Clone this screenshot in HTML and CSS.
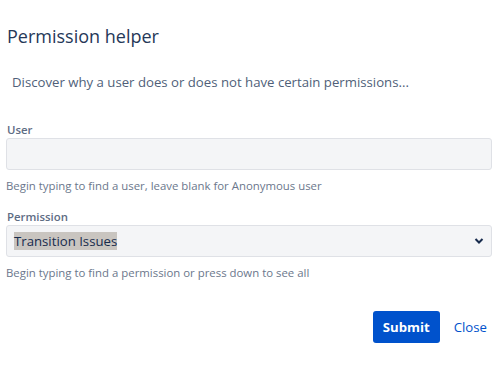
FILE: index.html
```html
<!DOCTYPE html>
<html lang="en">
<head>
    <meta charset="UTF-8">
    <title>Permission helper</title>
    <link rel="stylesheet" href="styles.css">
</head>
<body>
    <div class="dialog">
        <h2 class="dialog-title">Permission helper</h2>
        <p class="intro">Discover why a user does or does not have certain permissions...</p>

        <form class="form">
            <div class="field">
                <label for="user">User</label>
                <input type="text" id="user" class="text-input">
                <div class="hint">Begin typing to find a user, leave blank for Anonymous user</div>
            </div>

            <div class="field">
                <label for="permission">Permission</label>
                <div class="select">
                    <span class="selected-value">Transition Issues</span>
                    <svg class="chevron" width="10" height="8" viewBox="0 0 10 8">
                        <path d="M1.5 2 L5 5.5 L8.5 2" fill="none" stroke="#172b4d" stroke-width="2"/>
                    </svg>
                </div>
                <div class="hint">Begin typing to find a permission or press down to see all</div>
            </div>

            <div class="actions">
                <button type="button" class="btn-primary">Submit</button>
                <a href="#" class="link">Close</a>
            </div>
        </form>
    </div>
</body>
</html>
```

FILE: styles.css
```css
:root {
    --text: #172b4d;
    --heading: #253858;
    --muted: #6b778c;
    --label: #5e6c84;
    --field-bg: #f4f5f7;
    --field-border: #dfe1e6;
    --primary: #0052cc;
}

* {
    box-sizing: border-box;
    margin: 0;
    padding: 0;
}

body {
    font-family: 'Open Sans', sans-serif;
    background: #ffffff;
    color: var(--text);
}

.dialog {
    padding: 24px 11px 0 6px;
}

.dialog-title {
    font-size: 18px;
    font-weight: 400;
    color: var(--heading);
    line-height: 24px;
    padding-left: 1px;
}

.intro {
    font-size: 13.2px;
    color: #505f79;
    margin-top: 24px;
    padding-left: 6px;
    line-height: 20px;
}

.form {
    margin-top: 30px;
}

.field {
    margin-bottom: 15px;
}

.field label {
    display: block;
    font-size: 11.4px;
    font-weight: 600;
    color: var(--label);
    line-height: 16px;
    padding-left: 1px;
}

.text-input,
.select {
    width: 100%;
    height: 32px;
    background: var(--field-bg);
    border: 1px solid var(--field-border);
    border-radius: 3px;
}

.select {
    display: flex;
    align-items: center;
    justify-content: space-between;
    padding: 0 7px 0 7px;
}

.selected-value {
    background: #c9c5c0;
    font-size: 13.2px;
    line-height: 18px;
    color: var(--text);
}

.hint {
    font-size: 11.4px;
    color: var(--muted);
    margin-top: 8px;
    line-height: 16px;
}

.actions {
    display: flex;
    justify-content: flex-end;
    align-items: center;
    gap: 14px;
    margin-top: 30px;
}

.btn-primary {
    background: var(--primary);
    color: #ffffff;
    border: none;
    border-radius: 3px;
    height: 32px;
    padding: 0 10px;
    font-family: inherit;
    font-size: 13.2px;
    font-weight: 700;
}

.link {
    color: var(--primary);
    text-decoration: none;
    font-size: 13.2px;
    margin-right: 5px;
}
```
